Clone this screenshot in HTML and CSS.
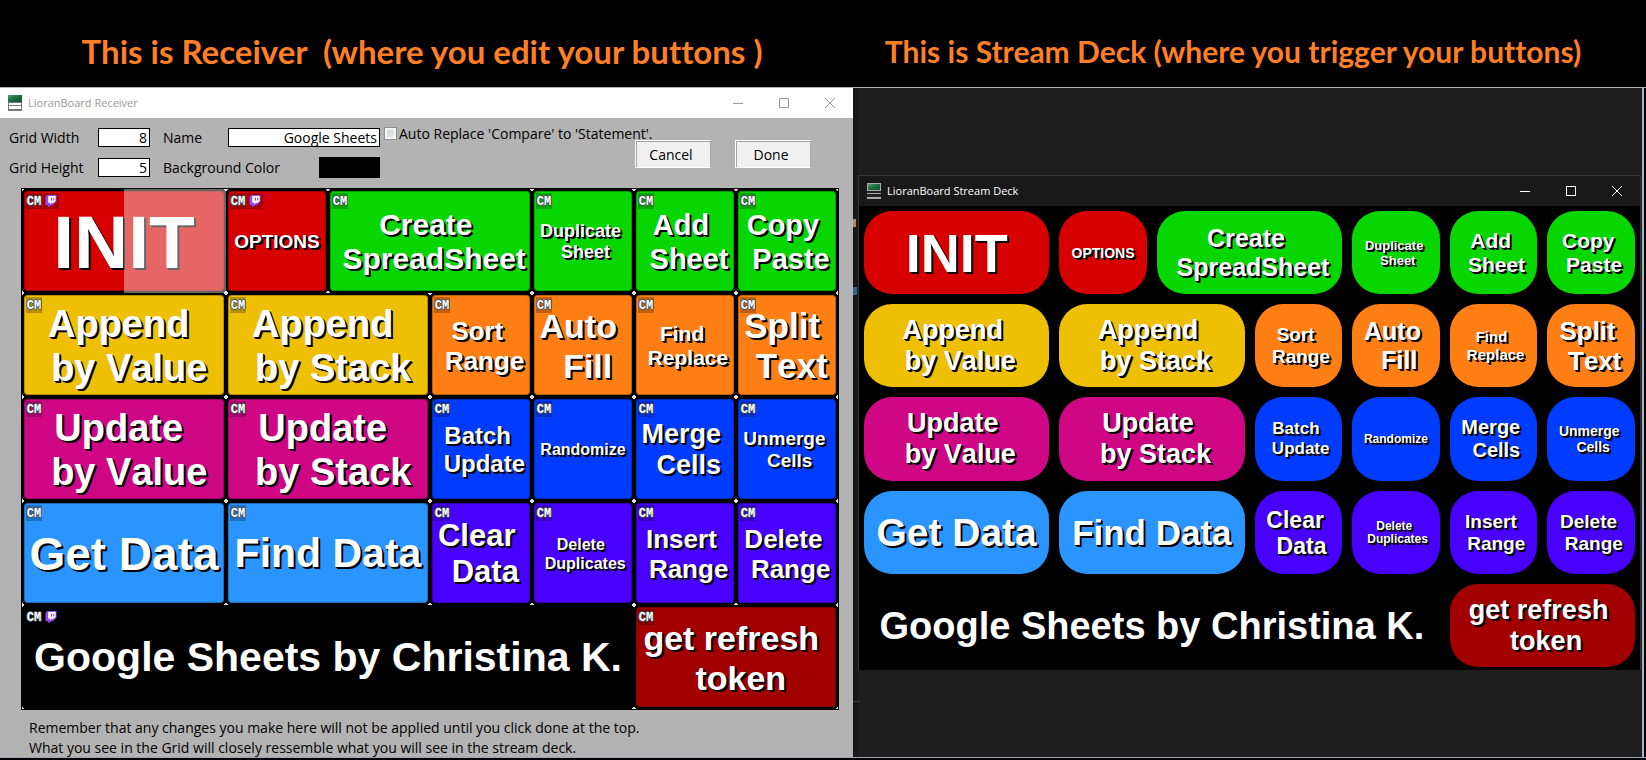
FILE: index.html
```html
<!DOCTYPE html>
<html lang="en">
<head>
<meta charset="utf-8">
<title>LioranBoard</title>
<link rel="stylesheet" href="styles.css">
</head>
<body>
<svg class="defs" aria-hidden="true">
  <defs>
    <linearGradient id="green" x1="0" y1="0" x2="1" y2="1">
      <stop offset="0" stop-color="#5d9a78"/><stop offset="0.5" stop-color="#1f6b3c"/><stop offset="1" stop-color="#0f5a2c"/>
    </linearGradient>
    <symbol id="twitch" viewBox="0 0 12 13">
      <path fill="#9146ff" d="M2 0h10v7l-4 4H6l-2 2H3v-2H0V2z"/>
      <path fill="#fff" d="M3 1h8v5.500L9 8.500H7L5 10V8.500H3z"/>
      <path fill="#6a2bd0" d="M6 3h1v3H6zM8.500 3h1v3h-1z"/>
    </symbol>
    <symbol id="min" viewBox="0 0 10 10"><path d="M0 5.500h10" fill="none" stroke="currentColor"/></symbol>
    <symbol id="max" viewBox="0 0 10 10"><path d="M.5.5h9v9h-9z" fill="none" stroke="currentColor"/></symbol>
    <symbol id="close" viewBox="0 0 10 10"><path d="M0 0l10 10M10 0L0 10" fill="none" stroke="currentColor"/></symbol>
  </defs>
</svg>

<header class="heads">
  <h1 class="large">This is Receiver&nbsp; (where you edit your buttons )</h1>
  <h1>This is Stream Deck (where you trigger your buttons)</h1>
</header>

<main class="panes">
  <section class="receiver">
    <div class="titlebar">
      <svg class="appicon" viewBox="0 0 14 16"><path fill="#777" d="M0 0h14v16H0z"/><path fill="url(#green)" d="M0 0h14v7H0z"/><path fill="#fff" d="M1 8h12v2H1zM1 11h12v3H1z"/></svg>
      <span class="title">LioranBoard Receiver</span>
      <button class="winbtn" aria-label="Minimize"><svg><use href="#min"/></svg></button>
      <button class="winbtn" aria-label="Maximize"><svg><use href="#max"/></svg></button>
      <button class="winbtn" aria-label="Close"><svg><use href="#close"/></svg></button>
    </div>

    <form class="toolbar">
      <div class="fields size">
        <label for="gw">Grid Width</label><input id="gw" type="text" value="8">
        <label for="gh">Grid Height</label><input id="gh" type="text" value="5">
      </div>
      <div class="fields look">
        <label for="nm">Name</label><input id="nm" type="text" value="Google Sheets">
        <label for="bg">Background Color</label><button id="bg" class="swatch" type="button"></button>
      </div>
      <div class="actions">
        <label class="check"><input type="checkbox">Auto Replace 'Compare' to 'Statement'.</label>
        <div class="buttons"><button type="button" class="classic">Cancel</button><button type="button" class="classic">Done</button></div>
      </div>
    </form>

    <div class="grid">
      <button class="tile red w2"><span class="face"><span class="cm">CM</span><svg class="tw"><use href="#twitch"/></svg><span class="s75">INIT</span></span><span class="hover"></span></button>
      <button class="tile red"><span class="face"><span class="cm">CM</span><svg class="tw"><use href="#twitch"/></svg><span class="s19">OPTIONS</span></span></button>
      <button class="tile green w2"><span class="face"><span class="cm">CM</span><span class="s30">Create 
 SpreadSheet</span></span></button>
      <button class="tile green"><span class="face"><span class="cm">CM</span><span class="s18">Duplicate 
 Sheet</span></span></button>
      <button class="tile green"><span class="face"><span class="cm">CM</span><span class="s29">Add 
 Sheet</span></span></button>
      <button class="tile green"><span class="face"><span class="cm">CM</span><span class="s29">Copy 
 Paste</span></span></button>

      <button class="tile yellow w2"><span class="face"><span class="cm">CM</span><span class="s38">Append 
 by Value</span></span></button>
      <button class="tile yellow w2"><span class="face"><span class="cm">CM</span><span class="s38">Append 
 by Stack</span></span></button>
      <button class="tile orange"><span class="face"><span class="cm">CM</span><span class="s26">Sort 
 Range</span></span></button>
      <button class="tile orange"><span class="face"><span class="cm">CM</span><span class="s34">Auto 
 Fill</span></span></button>
      <button class="tile orange"><span class="face"><span class="cm">CM</span><span class="s21">Find 
 Replace</span></span></button>
      <button class="tile orange"><span class="face"><span class="cm">CM</span><span class="s35">Split 
 Text</span></span></button>

      <button class="tile pink w2"><span class="face"><span class="cm">CM</span><span class="s38">Update 
 by Value</span></span></button>
      <button class="tile pink w2"><span class="face"><span class="cm">CM</span><span class="s38">Update 
 by Stack</span></span></button>
      <button class="tile blue"><span class="face"><span class="cm">CM</span><span class="s24">Batch 
 Update</span></span></button>
      <button class="tile blue"><span class="face"><span class="cm">CM</span><span class="s16">Randomize</span></span></button>
      <button class="tile blue"><span class="face"><span class="cm">CM</span><span class="s27">Merge 
 Cells</span></span></button>
      <button class="tile blue"><span class="face"><span class="cm">CM</span><span class="s19">Unmerge 
 Cells</span></span></button>

      <button class="tile sky w2"><span class="face"><span class="cm">CM</span><span class="s46">Get Data</span></span></button>
      <button class="tile sky w2"><span class="face"><span class="cm">CM</span><span class="s41">Find Data</span></span></button>
      <button class="tile violet"><span class="face"><span class="cm">CM</span><span class="s31">Clear 
 Data</span></span></button>
      <button class="tile violet"><span class="face"><span class="cm">CM</span><span class="s16">Delete 
 Duplicates</span></span></button>
      <button class="tile violet"><span class="face"><span class="cm">CM</span><span class="s26">Insert 
 Range</span></span></button>
      <button class="tile violet"><span class="face"><span class="cm">CM</span><span class="s26">Delete 
 Range</span></span></button>

      <button class="tile black w6"><span class="face"><span class="cm">CM</span><svg class="tw"><use href="#twitch"/></svg><span class="s41">Google Sheets by Christina K.</span></span></button>
      <button class="tile maroon w2"><span class="face"><span class="cm">CM</span><span class="s34">get refresh 
 token</span></span></button>
    </div>

    <p class="notes">Remember that any changes you make here will not be applied until you click done at the top.<br>What you see in the Grid will closely ressemble what you will see in the stream deck.</p>
  </section>

  <section class="desktop">
    <div class="deck">
      <div class="titlebar dark">
        <svg class="appicon" viewBox="0 0 14 16"><path fill="#aaa" d="M0 0h14v16H0z"/><path fill="url(#green)" d="M1 1h12v6H1z"/><path fill="#222" d="M0 8h14v2H0zM0 11h14v3H0z"/></svg>
        <span class="title">LioranBoard Stream Deck</span>
        <button class="winbtn" aria-label="Minimize"><svg><use href="#min"/></svg></button>
        <button class="winbtn" aria-label="Maximize"><svg><use href="#max"/></svg></button>
        <button class="winbtn" aria-label="Close"><svg><use href="#close"/></svg></button>
      </div>
      <div class="board">
        <button class="key red w2"><span class="s54">INIT</span></button>
        <button class="key red"><span class="s14">OPTIONS</span></button>
        <button class="key green w2"><span class="s25">Create 
 SpreadSheet</span></button>
        <button class="key green"><span class="s13">Duplicate 
 Sheet</span></button>
        <button class="key green"><span class="s21">Add 
 Sheet</span></button>
        <button class="key green"><span class="s21">Copy 
 Paste</span></button>

        <button class="key yellow w2"><span class="s27">Append 
 by Value</span></button>
        <button class="key yellow w2"><span class="s27">Append 
 by Stack</span></button>
        <button class="key orange"><span class="s19">Sort 
 Range</span></button>
        <button class="key orange"><span class="s25">Auto 
 Fill</span></button>
        <button class="key orange"><span class="s15">Find 
 Replace</span></button>
        <button class="key orange"><span class="s26">Split 
 Text</span></button>

        <button class="key pink w2"><span class="s27">Update 
 by Value</span></button>
        <button class="key pink w2"><span class="s27">Update 
 by Stack</span></button>
        <button class="key blue"><span class="s17">Batch 
 Update</span></button>
        <button class="key blue"><span class="s12">Randomize</span></button>
        <button class="key blue"><span class="s20">Merge 
 Cells</span></button>
        <button class="key blue"><span class="s14">Unmerge 
 Cells</span></button>

        <button class="key sky w2"><span class="s39">Get Data</span></button>
        <button class="key sky w2"><span class="s35">Find Data</span></button>
        <button class="key violet"><span class="s23">Clear 
 Data</span></button>
        <button class="key violet"><span class="s12">Delete 
 Duplicates</span></button>
        <button class="key violet"><span class="s19">Insert 
 Range</span></button>
        <button class="key violet"><span class="s19">Delete 
 Range</span></button>

        <button class="key black w6"><span class="s38">Google Sheets by Christina K.</span></button>
        <button class="key maroon w2"><span class="s27">get refresh 
 token</span></button>
      </div>
    </div>
  </section>
</main>
</body>
</html>
```
FILE: styles.css
```css
* { box-sizing: border-box; }

body {
  margin: 0;
  min-height: 100vh;
  background: #000;
  font-family: "Open Sans", "Noto Sans", sans-serif;
  font-size: 14px;
  color: #000;
}

.defs { position: absolute; width: 0; height: 0; }

button { font: inherit; color: inherit; border: 0; padding: 0; margin: 0; background: none; }

.heads, .panes { display: grid; grid-template-columns: 853fr 793fr; }

.heads {
  grid-template-columns: 844fr 778fr;
  height: 87px;
  padding: 15px 24px 0 0;
  align-items: center;
}
.heads h1 {
  margin: 0;
  text-align: center;
  white-space: nowrap;
  font: bold 30px/40px Lato, sans-serif;
  font-variant-ligatures: none;
  color: #ff7f27;
}
.heads .large { font-size: 33px; }

.panes { border-top: 1px solid #a9b4b8; border-bottom: 1px solid #9aa4b4; }

/* Title bars */
.titlebar {
  display: flex;
  align-items: center;
  height: 30px;
  padding-left: 8px;
  background: #fff;
  color: #999;
  font-size: 11px;
}
.titlebar.dark { background: #191919; color: #fff; }
.appicon { width: 14px; height: 16px; margin-right: 6px; }
.title { flex: 1; line-height: 16px; padding-bottom: 1px; }
.winbtn { display: flex; width: 46px; height: 30px; align-items: center; justify-content: center; }
.winbtn svg { width: 10px; height: 10px; }

/* Receiver window */
.receiver { background: #b3b3b3; }

.toolbar { display: flex; height: 70px; padding-top: 7px; padding-left: 9px; }
.fields { display: grid; grid-template-rows: 25px 25px; row-gap: 5px; align-items: center; white-space: nowrap; }
.size { grid-template-columns: 89px 52px; margin-right: 13px; }
.look { grid-template-columns: 65px 91px 61px; }
.look input { grid-column: 2 / 4; }
.look label:nth-of-type(2) { grid-column: 1 / 3; }
.fields input {
  width: 100%;
  height: 19px;
  padding: 0 2px 1px;
  border: 1px solid #000;
  background: #fff;
  font: inherit;
  text-align: right;
}
.swatch { height: 21px; background: #000; }
.actions { margin-left: 4px; }
.check { display: flex; align-items: center; height: 16px; gap: 2px; white-space: nowrap; }
.check input {
  appearance: none;
  width: 13px;
  height: 13px;
  margin: 0;
  border: 1px solid #8e8f8f;
  background: linear-gradient(135deg, #c4cad2, #f4f4f4);
  box-shadow: inset 0 0 0 2px #f4f4f4;
}
.buttons { display: flex; gap: 24px; padding-left: 251px; margin-top: -1px; }
.classic {
  width: 76px;
  height: 28px;
  padding-right: 4px;
  border: 1px solid #fff;
  border-right-color: #aaa;
  background: #f0f0f0;
  box-shadow: inset 1px 1px 0 #a5a5a5;
}

.grid {
  display: grid;
  grid-template-columns: repeat(8, 1fr);
  grid-auto-rows: 104px;
  margin: 0 14px 0 21px;
  padding: 1px;
  background: #000;
}
.w2 { grid-column: span 2; }
.w6 { grid-column: span 6; }

.tile {
  position: relative;
  padding: 2px;
  background:
    radial-gradient(circle at 0 0, #ddd 2px, transparent 2px),
    radial-gradient(circle at 100% 0, #ddd 2px, transparent 2px),
    radial-gradient(circle at 0 100%, #ddd 2px, transparent 2px),
    radial-gradient(circle at 100% 100%, #ddd 2px, transparent 2px),
    #000;
}
.face {
  position: relative;
  display: flex;
  height: 100%;
  align-items: center;
  justify-content: center;
  border-radius: 4px;
  background: var(--c);
  box-shadow: inset 0 0 0 1px rgba(0, 0, 0, 0.25);
}
.hover { position: absolute; inset: 0 0 0 50%; background: rgba(255, 255, 255, 0.4); }

.cm, .tw { position: absolute; top: 2px; width: 16px; height: 16px; background: rgba(0, 0, 0, 0.25); }
.cm {
  left: 2px;
  font: bold 12px/18px "Liberation Mono", monospace;
  color: #fff;
  text-shadow: 1px 0 #4a5560, -1px 0 #4a5560, 0 1px #4a5560, 0 -1px #4a5560;
}
.tw { left: 19px; padding: 2px; }

.notes { margin: 0; padding: 8px 29px 0; line-height: 20px; height: 47px; }

/* Stream deck window */
.desktop {
  margin-right: 2px;
  border-right: 2px solid #a9b4c8;
  padding: 87px 1px 0 5px;
  background:
    linear-gradient(#b08a70, #b08a70) 0 131px / 3px 8px no-repeat,
    linear-gradient(#2f6496, #2f6496) 0 199px / 4px 8px no-repeat,
    linear-gradient(#3a3a3a, #3a3a3a) 0 613px / 7px 1px no-repeat,
    linear-gradient(90deg, #141414, #1b1b1b) 0 0 / 5px 100% no-repeat,
    #1e1e1e;
}
.deck { border: 1px solid #333; border-bottom: 0; }
.board {
  display: grid;
  grid-template-columns: repeat(8, 1fr);
  grid-template-rows: repeat(5, 1fr);
  height: 464px;
  gap: 10px;
  padding: 5px 5px 3px;
  background: #000;
}
.key { display: flex; align-items: center; justify-content: center; border-radius: 28px; background: var(--c); }

.face > [class^="s"], .key > span {
  position: relative;
  padding-top: 1px;
  text-align: center;
  white-space: pre;
  font-family: "Liberation Sans", Arial, sans-serif;
  font-weight: bold;
  font-kerning: none;
  color: #fff;
  text-shadow: 1px 1px #000, 2px 2px #000;
}

/* Key colours */
.red { --c: #d60000; }
.green { --c: #08d600; }
.yellow { --c: #efbf04; }
.orange { --c: #ff7f14; }
.pink { --c: #d00784; }
.blue { --c: #003cff; }
.sky { --c: #2b95ff; }
.violet { --c: #4800ff; }
.maroon { --c: #a20000; }
.black { --c: #000; }

/* Caption sizes */
.s12 { font-size: 12px; line-height: 13px; }
.s13 { font-size: 13px; line-height: 15px; }
.s14 { font-size: 14px; line-height: 16px; }
.s15 { font-size: 15px; line-height: 18px; }
.s16 { font-size: 16px; line-height: 19px; }
.s17 { font-size: 17px; line-height: 20px; }
.s18 { font-size: 18px; line-height: 21px; }
.s19 { font-size: 19px; line-height: 22px; }
.s20 { font-size: 20px; line-height: 23px; }
.s21 { font-size: 21px; line-height: 24px; }
.s23 { font-size: 23px; line-height: 26px; }
.s24 { font-size: 24px; line-height: 28px; }
.s25 { font-size: 25px; line-height: 29px; }
.s26 { font-size: 26px; line-height: 30px; }
.s27 { font-size: 27px; line-height: 31px; }
.s29 { font-size: 29px; line-height: 34px; }
.s30 { font-size: 30px; line-height: 34px; }
.s31 { font-size: 31px; line-height: 36px; }
.s34 { font-size: 34px; line-height: 40px; }
.s35 { font-size: 35px; line-height: 40px; }
.s38 { font-size: 38px; line-height: 44px; }
.s39 { font-size: 39px; line-height: 45px; }
.s41 { font-size: 41px; line-height: 47px; }
.s46 { font-size: 46px; line-height: 52px; }
.s54 { font-size: 54px; line-height: 62px; }
.s75 { font-size: 75px; line-height: 86px; }
```
